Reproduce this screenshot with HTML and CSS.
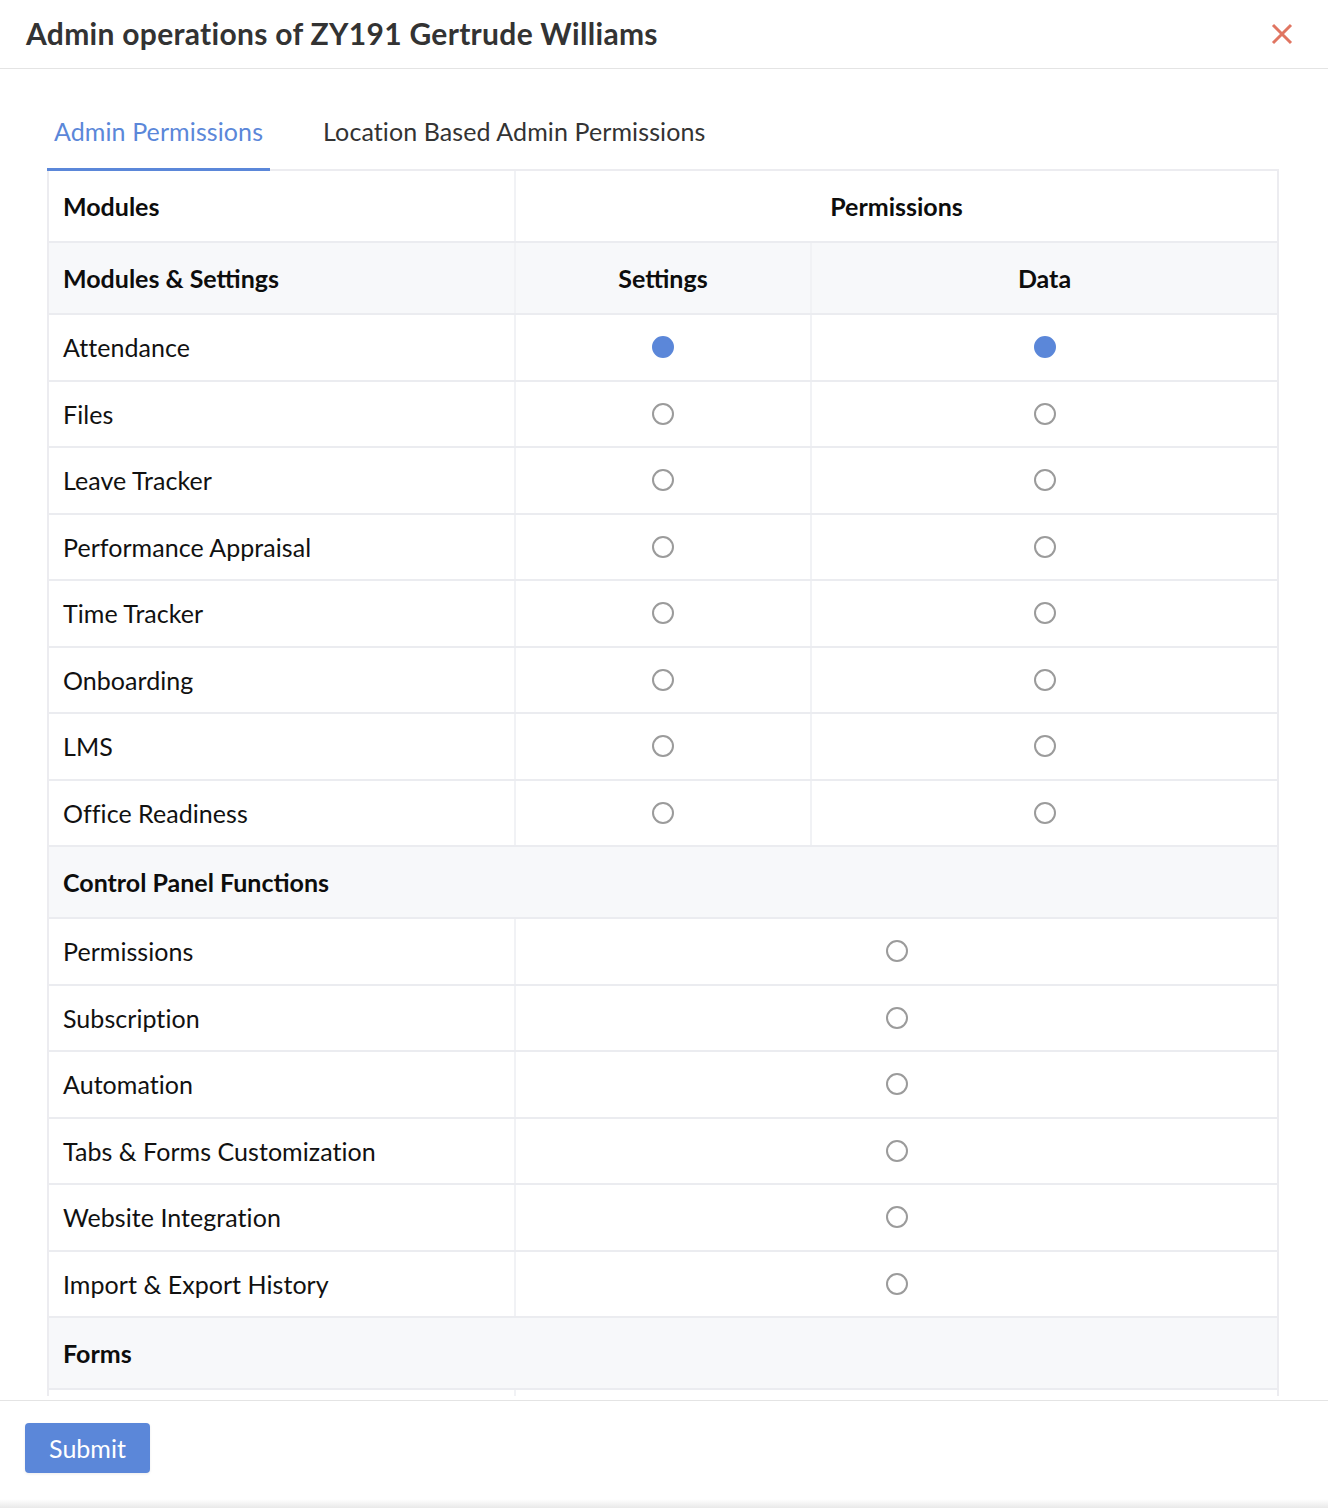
FILE: index.html
```html
<!DOCTYPE html>
<html lang="en">
<head>
<meta charset="utf-8">
<title>Admin operations</title>
<link rel="stylesheet" href="styles.css">
</head>
<body>
<div class="modal">
  <header class="modal-header">
    <h1 class="title">Admin operations of ZY191 Gertrude Williams</h1>
    <button class="close" aria-label="Close">
      <svg width="22" height="22" viewBox="0 0 22 22"><path d="M2 2 L20 20 M20 2 L2 20" stroke="#e07561" stroke-width="3" fill="none"/></svg>
    </button>
  </header>
  <div class="content">
    <nav class="tabs">
      <span class="tab active">Admin Permissions</span>
      <span class="tab">Location Based Admin Permissions</span>
    </nav>
    <div class="grid">
      <div class="row head">
        <div class="cell name bold">Modules</div>
        <div class="cell span2 center bold">Permissions</div>
      </div>
      <div class="row head shade">
        <div class="cell name bold">Modules &amp; Settings</div>
        <div class="cell center bold">Settings</div>
        <div class="cell center bold last">Data</div>
      </div>
      <div class="row"><div class="cell name">Attendance</div><div class="cell center"><span class="radio on"></span></div><div class="cell center last"><span class="radio on"></span></div></div>
      <div class="row"><div class="cell name">Files</div><div class="cell center"><span class="radio"></span></div><div class="cell center last"><span class="radio"></span></div></div>
      <div class="row"><div class="cell name">Leave Tracker</div><div class="cell center"><span class="radio"></span></div><div class="cell center last"><span class="radio"></span></div></div>
      <div class="row"><div class="cell name">Performance Appraisal</div><div class="cell center"><span class="radio"></span></div><div class="cell center last"><span class="radio"></span></div></div>
      <div class="row"><div class="cell name">Time Tracker</div><div class="cell center"><span class="radio"></span></div><div class="cell center last"><span class="radio"></span></div></div>
      <div class="row"><div class="cell name">Onboarding</div><div class="cell center"><span class="radio"></span></div><div class="cell center last"><span class="radio"></span></div></div>
      <div class="row"><div class="cell name">LMS</div><div class="cell center"><span class="radio"></span></div><div class="cell center last"><span class="radio"></span></div></div>
      <div class="row"><div class="cell name">Office Readiness</div><div class="cell center"><span class="radio"></span></div><div class="cell center last"><span class="radio"></span></div></div>
      <div class="row head shade section"><div class="cell name bold full">Control Panel Functions</div></div>
      <div class="row"><div class="cell name">Permissions</div><div class="cell span2 center"><span class="radio"></span></div></div>
      <div class="row"><div class="cell name">Subscription</div><div class="cell span2 center"><span class="radio"></span></div></div>
      <div class="row"><div class="cell name">Automation</div><div class="cell span2 center"><span class="radio"></span></div></div>
      <div class="row"><div class="cell name">Tabs &amp; Forms Customization</div><div class="cell span2 center"><span class="radio"></span></div></div>
      <div class="row"><div class="cell name">Website Integration</div><div class="cell span2 center"><span class="radio"></span></div></div>
      <div class="row"><div class="cell name">Import &amp; Export History</div><div class="cell span2 center"><span class="radio"></span></div></div>
      <div class="row head shade section"><div class="cell name bold full">Forms</div></div>
      <div class="row"><div class="cell name"></div><div class="cell span2 center"></div></div>
    </div>
  </div>
  <footer class="modal-footer">
    <button class="submit">Submit</button>
  </footer>
  <div class="edge"></div>
</div>
</body>
</html>
```

FILE: styles.css
```css
* { box-sizing: border-box; }
html, body { margin: 0; padding: 0; background: #ffffff; }
body {
  font-family: Lato, "Open Sans", Arial, sans-serif;
  color: #111111;
  width: 1328px;
  height: 1508px;
  overflow: hidden;
}
.modal { display: flex; flex-direction: column; height: 1508px; }
.modal-header {
  height: 69px;
  border-bottom: 1px solid #e4e4e4;
  display: flex;
  align-items: center;
  justify-content: space-between;
  padding: 0 35px 0 26px;
}
.title {
  margin: 0;
  font-size: 30px;
  font-weight: 700;
  color: #333333;
  letter-spacing: 0.3px;
  padding-bottom: 3px;
}
.close {
  border: 0;
  background: none;
  padding: 0;
  width: 22px;
  height: 22px;
  display: flex;
}
.content {
  height: 1327px;
  overflow: hidden;
  padding: 1px 49px 0 47px;
}
.tabs {
  display: flex;
  gap: 46px;
  padding-top: 28px;
  border-bottom: 2px solid #ececf0;
}
.tab {
  font-size: 25px;
  letter-spacing: 0.1px;
  color: #333333;
  padding: 15px 7px 0;
  height: 73px;
  line-height: 36px;
  border-bottom: 3px solid transparent;
  margin-bottom: -2px;
}
.tab.active { color: #5b87d9; border-bottom-color: #5b87d9; }
.grid {
  border-left: 2px solid #ececf0;
  border-right: 2px solid #ececf0;
}
.row {
  display: grid;
  grid-template-columns: 467px 296px 1fr;
  height: 66.5px;
  border-bottom: 2px solid #ebecf0;
}
.row.head { height: 72px; }
.row.shade { background: #f7f8fa; }
.cell {
  display: flex;
  align-items: center;
  font-size: 25px;
  letter-spacing: 0.05px;
  border-right: 2px solid #f1f2f5;
}
.cell.last { border-right: 0; }
.cell.name { padding-left: 14px; }
.cell.span2 { grid-column: span 2; border-right: 0; }
.cell.full { grid-column: 1 / -1; border-right: 0; }
.cell.center { justify-content: center; }
.bold { font-weight: 700; color: #0d0d0d; letter-spacing: 0; }
.radio {
  width: 22px;
  height: 22px;
  border-radius: 50%;
  border: 2px solid #9b9b9b;
  display: block;
}
.radio.on { background: #5b87d9; border-color: #5b87d9; }
.modal-footer {
  margin-top: 4px;
  border-top: 1px solid #e4e4e4;
  padding: 22px 25px 0;
  flex: 1;
}
.submit {
  font-family: Lato, "Open Sans", Arial, sans-serif;
  width: 125px;
  height: 50px;
  padding: 0;
  line-height: 50px;
  border: 0;
  border-radius: 4px;
  background: #5b87d9;
  color: #ffffff;
  font-size: 25px;
  box-shadow: 0 1px 3px rgba(0, 0, 0, 0.08);
}
.edge {
  height: 9px;
  background: linear-gradient(#ffffff, #e9e9e9);
}
```
